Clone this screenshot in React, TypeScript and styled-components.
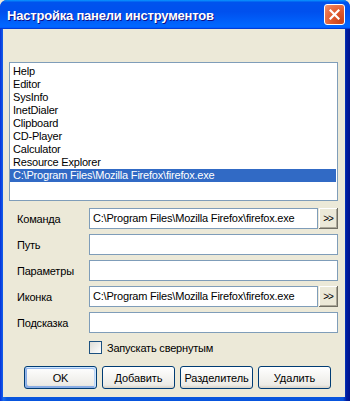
import { createGlobalStyle, styled } from "styled-components";
import { useState } from "react";

const GlobalStyle = createGlobalStyle`
  body {
    margin: 0;
    background: #ece9d8;
    font-family: "Liberation Sans", Arial, sans-serif;
    font-size: 11px;
    letter-spacing: -0.2px;
  }
`;

const Window = styled.div`
  width: 350px;
  height: 401px;
  display: flex;
  flex-direction: column;
  box-sizing: border-box;
  background: #0831d9;
  border-radius: 7px 7px 0 0;
  overflow: hidden;
`;

const TitleBar = styled.div`
  height: 29px;
  flex: none;
  display: flex;
  align-items: center;
  justify-content: space-between;
  padding: 0 5px 0 7px;
  background: linear-gradient(
    180deg,
    #0997ff,
    #0053ee 8%,
    #0050ee 40%,
    #06f 88%,
    #06f 93%,
    #005bff 95%,
    #003dd7 96%,
    #003dd7
  );
`;

const Title = styled.span`
  color: #fff;
  font-weight: bold;
  font-size: 13px;
  letter-spacing: -0.2px;
  text-shadow: 1px 1px #0f1089;
  padding-top: 1px;
`;

const CloseButton = styled.div`
  width: 21px;
  height: 21px;
  box-sizing: border-box;
  border: 1px solid #fff;
  border-radius: 3px;
  background: radial-gradient(
    circle at 85% 85%,
    #c8431b 0%,
    #e05a2e 45%,
    #e8764f 75%,
    #ef9677 100%
  );
  display: flex;
  align-items: center;
  justify-content: center;
`;

const Frame = styled.div`
  flex: 1;
  display: flex;
  padding: 0 5px 4px 3px;
  background: linear-gradient(90deg, #0831d9, #166aee 1%, #0855dd 2%, #0855dd 98%, #001ea0 99%, #00138c);
`;

const Client = styled.div`
  flex: 1;
  background: #ece9d8;
  padding: 33px 7px 0 6px;
  display: flex;
  flex-direction: column;
`;

const ListBox = styled.ul`
  margin: 0;
  padding: 2px 1px 0 0;
  list-style: none;
  height: 139px;
  box-sizing: border-box;
  border: 1px solid #7f9db9;
  background: #fff;
`;

const ListItem = styled.li<{ $selected: boolean }>`
  height: 13px;
  line-height: 13px;
  padding-left: 3px;
  white-space: nowrap;
  overflow: hidden;
  color: ${(p) => (p.$selected ? "#fff" : "#000")};
  background: ${(p) => (p.$selected ? "#316ac5" : "transparent")};
`;

const Form = styled.div`
  margin-top: 7px;
  display: flex;
  flex-direction: column;
  gap: 5px;
`;

const Row = styled.div`
  display: flex;
  align-items: center;
  height: 21px;
  padding-left: 8px;
`;

const Label = styled.span`
  width: 72px;
  flex: none;
  color: #000;
`;

const Input = styled.div`
  flex: 1;
  height: 21px;
  box-sizing: border-box;
  border: 1px solid #7f9db9;
  background: #fff;
  padding-left: 3px;
  line-height: 19px;
  white-space: nowrap;
  overflow: hidden;
`;

const BrowseButton = styled.div`
  width: 19px;
  height: 21px;
  margin-left: 1px;
  box-sizing: border-box;
  background: #ece9d8;
  box-shadow: inset -1px -1px #716f64, inset 1px 1px #fff, inset -2px -2px #aca899;
  display: flex;
  align-items: center;
  justify-content: center;
  font-size: 10px;
  letter-spacing: -1px;
  padding-right: 1px;
`;

const CheckRow = styled.label`
  margin-top: 8px;
  padding-left: 80px;
  display: flex;
  align-items: center;
  gap: 5px;
  height: 13px;
`;

const CheckBox = styled.span`
  width: 13px;
  height: 13px;
  box-sizing: border-box;
  border: 1px solid #1c5180;
  background: linear-gradient(135deg, #dcdcd7, #fff);
`;

const ButtonRow = styled.div`
  margin-top: 12px;
  padding-left: 15px;
  display: flex;
  gap: 5px;
`;

const Button = styled.button<{ $default?: boolean }>`
  width: 73px;
  height: 23px;
  padding: 0;
  border: 1px solid #003c74;
  border-radius: 3px;
  background: linear-gradient(180deg, #fff, #ecebe6 86%, #d6d0c5);
  font-family: "Liberation Sans", Arial, sans-serif;
  font-size: 11px;
  letter-spacing: -0.1px;
  color: #000;
  box-shadow: ${(p) =>
    p.$default
      ? "inset -1px 1px #cee7ff, inset 1px 2px #98b8ea, inset -2px 2px #bcd4f6, inset 1px -1px #89ade4, inset 2px -2px #89ade4"
      : "none"};
`;

const items = [
  "Help",
  "Editor",
  "SysInfo",
  "InetDialer",
  "Clipboard",
  "CD-Player",
  "Calculator",
  "Resource Explorer",
  "C:\\Program Files\\Mozilla Firefox\\firefox.exe",
];

const exe = "C:\\Program Files\\Mozilla Firefox\\firefox.exe";

export default function App() {
  const [selected, setSelected] = useState(8);

  return (
    <Window>
      <GlobalStyle />
      <TitleBar>
        <Title>Настройка панели инструментов</Title>
        <CloseButton>
          <svg width="11" height="11" viewBox="0 0 11 11">
            <path d="M1.5 1.5 L9.5 9.5 M9.5 1.5 L1.5 9.5" stroke="#fff" strokeWidth="2.2" strokeLinecap="square" />
          </svg>
        </CloseButton>
      </TitleBar>
      <Frame>
        <Client>
          <ListBox>
            {items.map((item, i) => (
              <ListItem key={item} $selected={i === selected} onClick={() => setSelected(i)}>
                {item}
              </ListItem>
            ))}
          </ListBox>
          <Form>
            <Row>
              <Label>Команда</Label>
              <Input>{exe}</Input>
              <BrowseButton>&gt;&gt;</BrowseButton>
            </Row>
            <Row>
              <Label>Путь</Label>
              <Input />
            </Row>
            <Row>
              <Label>Параметры</Label>
              <Input />
            </Row>
            <Row>
              <Label>Иконка</Label>
              <Input>{exe}</Input>
              <BrowseButton>&gt;&gt;</BrowseButton>
            </Row>
            <Row>
              <Label>Подсказка</Label>
              <Input />
            </Row>
          </Form>
          <CheckRow>
            <CheckBox />
            Запускать свернутым
          </CheckRow>
          <ButtonRow>
            <Button $default>OK</Button>
            <Button>Добавить</Button>
            <Button>Разделитель</Button>
            <Button>Удалить</Button>
          </ButtonRow>
        </Client>
      </Frame>
    </Window>
  );
}
